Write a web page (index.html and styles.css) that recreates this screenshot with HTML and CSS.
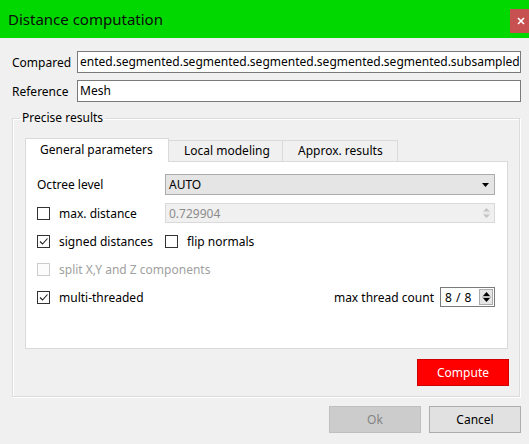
FILE: index.html
```html
<!DOCTYPE html>
<html>
<head>
<meta charset="utf-8">
<link rel="stylesheet" href="styles.css">
</head>
<body>
<div class="window">
  <div class="titlebar">
    <span class="title">Distance computation</span>
    <span class="close"><svg width="8" height="8" viewBox="0 0 8 8"><path d="M1 1L7 7M7 1L1 7" stroke="#fff" stroke-width="1.6"/></svg></span>
  </div>
  <div class="content">
    <div class="field-row">
      <span class="field-label">Compared</span>
      <div class="line-edit">ented.segmented.segmented.segmented.segmented.segmented.subsampled</div>
    </div>
    <div class="field-row">
      <span class="field-label">Reference</span>
      <div class="line-edit">Mesh</div>
    </div>
    <fieldset class="group">
      <legend>Precise results</legend>
      <div class="group-body">
        <div class="tabs">
          <div class="tab-bar">
            <div class="tab active">General parameters</div>
            <div class="tab">Local modeling</div>
            <div class="tab">Approx. results</div>
          </div>
          <div class="pane">
            <div class="prow r-octree">
              <span class="plabel">Octree level</span>
              <div class="combo"><span>AUTO</span><svg width="7" height="4" viewBox="0 0 7 4"><path d="M0 0H7L3.5 4Z" fill="#000"/></svg></div>
            </div>
            <div class="prow">
              <span class="check"><span class="cb"></span><span>max. distance</span></span>
              <div class="spin disabled"><span>0.729904</span>
                <svg class="arrows" width="9" height="14" viewBox="0 0 9 14"><path d="M1 5.5H8L4.5 2Z M1 8.5H8L4.5 12Z" fill="#c4c4c4"/><path d="M0.5 7H8.5" stroke="#e2e2e2"/></svg>
              </div>
            </div>
            <div class="prow">
              <span class="check"><span class="cb"><svg width="11" height="11" viewBox="0 0 11 11"><path d="M2 5.5L4.5 8L9.5 2.5" fill="none" stroke="#222" stroke-width="1.1"/></svg></span><span>signed distances</span></span>
              <span class="check"><span class="cb"></span><span>flip normals</span></span>
            </div>
            <div class="prow">
              <span class="check disabled wide"><span class="cb"></span><span>split X,Y and Z components</span></span>
            </div>
            <div class="prow">
              <span class="check"><span class="cb"><svg width="11" height="11" viewBox="0 0 11 11"><path d="M2 5.5L4.5 8L9.5 2.5" fill="none" stroke="#222" stroke-width="1.1"/></svg></span><span>multi-threaded</span></span>
              <div class="threads">
                <span>max thread count</span>
                <div class="spin small"><span>8 / 8</span>
                  <span class="spin-btn"><svg width="9" height="14" viewBox="0 0 9 14"><path d="M1 6H8L4.5 2Z M1 8H8L4.5 12Z" fill="#000"/><path d="M0 7H9" stroke="#9a9a9a"/></svg></span>
                </div>
              </div>
            </div>
          </div>
        </div>
        <button class="btn compute">Compute</button>
      </div>
    </fieldset>
    <div class="buttons">
      <button class="btn ok">Ok</button>
      <button class="btn cancel">Cancel</button>
    </div>
  </div>
</div>
</body>
</html>
```

FILE: styles.css
```css
* { box-sizing: border-box; }
html, body {
  margin: 0;
  padding: 0;
  background: #f0f0f0;
}
body {
  width: 529px;
  height: 444px;
  overflow: hidden;
  font-family: "Noto Sans", "Open Sans", sans-serif;
  font-size: 12px;
  color: #000;
}
.window {
  display: flex;
  flex-direction: column;
  height: 444px;
}
.titlebar {
  height: 38px;
  background: #00d800;
  display: flex;
  align-items: flex-start;
  padding-left: 8px;
}
.title {
  font-size: 15px;
  line-height: 20px;
  margin-top: 9px;
  color: #0c0c0c;
}
.close {
  margin-left: auto;
  margin-top: 9px;
  width: 19px;
  height: 24px;
  background: #c75050;
  display: flex;
  align-items: center;
  justify-content: center;
  padding-left: 2px;
}
.content {
  padding: 13px 8px 0 12px;
  display: flex;
  flex-direction: column;
}
.field-row {
  display: flex;
  align-items: center;
  height: 22px;
  margin-bottom: 7px;
}
.field-label {
  width: 65px;
}
.line-edit {
  flex: 1;
  height: 22px;
  border: 1px solid #7a7a7a;
  background: #fff;
  padding: 0 0 0 2px;
  line-height: 20px;
  white-space: nowrap;
  overflow: hidden;
}
.group {
  margin: 1px 1px 0 0;
  padding: 0;
  border: 1px solid #dcdcdc;
  box-shadow: inset 1px 1px 0 #fff, 1px 1px 0 #fff;
  min-width: 0;
}
.group legend {
  margin-left: 7px;
  padding: 0 2px;
  line-height: 16px;
}
.group-body {
  padding: 12px 11px 10px 12px;
  display: flex;
  flex-direction: column;
}
.tabs {
  display: flex;
  flex-direction: column;
}
.tab-bar {
  display: flex;
  align-items: flex-end;
  height: 23px;
  position: relative;
  z-index: 1;
}
.tab {
  height: 21px;
  line-height: 19px;
  border: 1px solid #d9d9d9;
  border-bottom: none;
  background: #f0f0f0;
  padding: 0 0 0 14px;
  margin-left: -1px;
  white-space: nowrap;
  flex: none;
}
.tab:nth-child(2) { width: 115px; padding-left: 15px; }
.tab:nth-child(3) { width: 116px; padding-left: 15px; }
.tab.active {
  height: 24px;
  margin-left: 0;
  margin-bottom: -1px;
  background: #fff;
  width: 144px;
  line-height: 22px;
}
.pane {
  height: 188px;
  background: #fff;
  border: 1px solid #d9d9d9;
  padding: 12px 12px 0 11px;
  display: flex;
  flex-direction: column;
  gap: 8px;
}
.prow {
  display: grid;
  grid-template-columns: 128px 1fr;
  align-items: center;
  height: 20px;
}
.r-octree { height: 21px; }
.combo {
  height: 21px;
  background: #e5e5e5;
  border: 1px solid #acacac;
  display: flex;
  align-items: center;
  justify-content: space-between;
  padding: 0 5px 0 3px;
}
.spin {
  height: 20px;
  border: 1px solid #d9d9d9;
  background: #f0f0f0;
  display: flex;
  align-items: center;
  justify-content: space-between;
  padding: 0 3px 0 3px;
}
.spin.disabled { color: #8c8c8c; }
.check {
  display: flex;
  align-items: center;
  gap: 9px;
  white-space: nowrap;
}
.check.wide { grid-column: 1 / 3; }
.check.disabled { color: #a0a0a0; }
.cb {
  width: 13px;
  height: 13px;
  border: 1px solid #333;
  background: #fff;
  display: flex;
  align-items: center;
  justify-content: center;
  flex: none;
}
.check.disabled .cb { border-color: #cccccc; background: #fcfcfc; }
.threads {
  justify-self: end;
  display: flex;
  align-items: center;
  gap: 6px;
}
.spin.small {
  width: 55px;
  border-color: #7a7a7a;
  background: #fff;
  padding: 0 1px 0 4px;
  word-spacing: 1px;
}
.spin-btn {
  width: 14px;
  height: 16px;
  background: #e6e6e6;
  border: 1px solid #acacac;
  display: flex;
  align-items: center;
  justify-content: center;
}
.btn {
  font-family: inherit;
  font-size: 12px;
  height: 27px;
  width: 92px;
  padding: 0;
  border: 1px solid #adadad;
  background: #e1e1e1;
  color: #000;
}
.compute {
  align-self: flex-end;
  margin-top: 10px;
  margin-right: -1px;
  background: #ff0000;
  border-color: #d00000;
  color: #fff;
}
.buttons {
  display: flex;
  justify-content: flex-end;
  gap: 8px;
  margin-top: 9px;
}
.ok {
  background: #cccccc;
  border-color: #bfbfbf;
  color: #838383;
}
```
